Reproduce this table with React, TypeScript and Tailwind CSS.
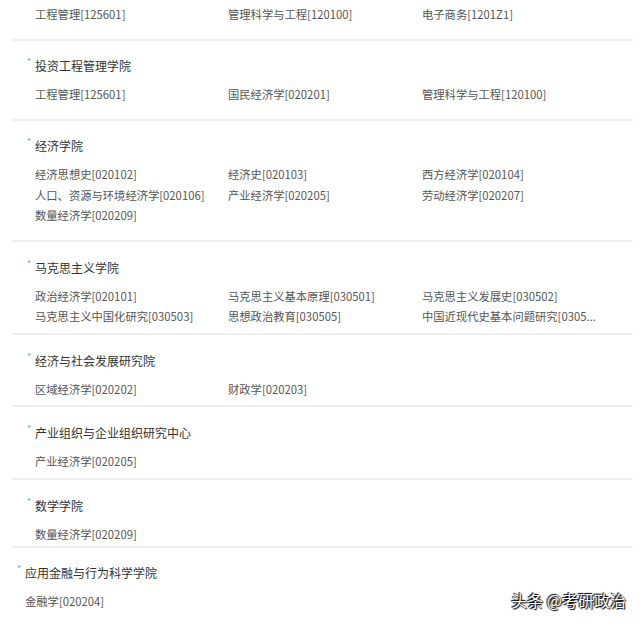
const sections = [
  {
    title: "",
    items: ["工程管理[125601]", "管理科学与工程[120100]", "电子商务[1201Z1]"],
    box: "pt-[4px] pb-[14px]",
  },
  {
    title: "投资工程管理学院",
    items: ["工程管理[125601]", "国民经济学[020201]", "管理科学与工程[120100]"],
    box: "pt-[15px] pb-[15px]",
  },
  {
    title: "经济学院",
    items: [
      "经济思想史[020102]",
      "经济史[020103]",
      "西方经济学[020104]",
      "人口、资源与环境经济学[020106]",
      "产业经济学[020205]",
      "劳动经济学[020207]",
      "数量经济学[020209]",
    ],
    box: "pt-[15px] pb-[14px]",
  },
  {
    title: "马克思主义学院",
    items: [
      "政治经济学[020101]",
      "马克思主义基本原理[030501]",
      "马克思主义发展史[030502]",
      "马克思主义中国化研究[030503]",
      "思想政治教育[030505]",
      "中国近现代史基本问题研究[0305...",
    ],
    box: "pt-[16px] pb-[6px]",
  },
  {
    title: "经济与社会发展研究院",
    items: ["区域经济学[020202]", "财政学[020203]"],
    box: "pt-[16px] pb-[5.5px]",
  },
  {
    title: "产业组织与企业组织研究中心",
    items: ["产业经济学[020205]"],
    box: "pt-[16px] pb-[6.5px]",
  },
  {
    title: "数学学院",
    items: ["数量经济学[020209]"],
    box: "pt-[16px] pb-[1.5px]",
  },
];

const Heading = ({ title }: { title: string }) => (
  <div className="-ml-[8px] mb-[8px] flex text-[12px] leading-[20px] text-[#333]">
    <span className="w-[8px] text-[9px] leading-[12px] text-[#6aa8e6]">*</span>
    <span>{title}</span>
  </div>
);

const Section = ({ title, items, box }: { title: string; items: string[]; box: string }) => (
  <div className={`ml-[12px] w-[621px] border-b-2 border-[#efefef] pl-[23px] ${box}`}>
    {title && <Heading title={title} />}
    <div className="grid grid-cols-[193px_194px_190px] text-[11.3px] leading-[20.5px] text-[#555]">
      {items.map((item, i) => (
        <div key={i} className="whitespace-nowrap">
          {item}
        </div>
      ))}
    </div>
  </div>
);

export default function App() {
  return (
    <div
      className="relative h-[622px] w-[640px] overflow-hidden bg-white"
      style={{ fontFamily: '"Noto Sans CJK SC", "Noto Sans", sans-serif' }}
    >
      {sections.map((s, i) => (
        <Section key={i} {...s} />
      ))}

      <div className="ml-[2px] w-[621px] pl-[23px] pt-[15px]">
        <Heading title="应用金融与行为科学学院" />
        <div className="text-[11.3px] leading-[20.5px] text-[#555]">金融学[020204]</div>
      </div>

      <div className="absolute right-[14px] top-[588px] text-[16px] leading-[24px] text-white [text-shadow:0_0_1px_#000,1px_1px_1px_#000,-1px_-1px_1px_#000]">
        头条 @考研政治
      </div>
    </div>
  );
}
